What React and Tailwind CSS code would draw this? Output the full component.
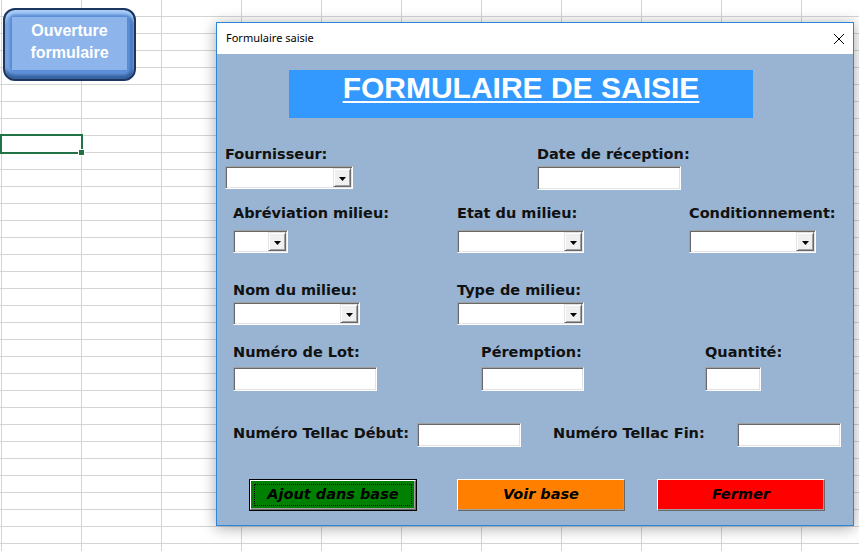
import { useState } from 'react'

// Contrôles façon UserForm VBA
const SUNKEN =
  'border border-t-[#a0a0a0] border-l-[#a0a0a0] border-r-white border-b-white shadow-[inset_1px_1px_0_#696969,inset_-1px_-1px_0_#e3e3e3] bg-white shrink-0'

function Label({ children, className = '' }) {
  return (
    <div className={`h-[18px] leading-[18px] text-[14.5px] font-bold text-[#111] whitespace-nowrap ${className}`}>
      {children}
    </div>
  )
}

function TextBox({ w, h = 24, className = '' }) {
  return <input className={`${SUNKEN} outline-none px-1 text-[13px] ${className}`} style={{ width: w, height: h }} />
}

function ComboBox({ w, className = '' }) {
  return (
    <div className={`${SUNKEN} flex justify-end p-px h-[23px] ${className}`} style={{ width: w }}>
      <div className="w-[18px] h-full bg-[#f0f0f0] border border-t-[#e3e3e3] border-l-[#e3e3e3] border-r-[#696969] border-b-[#696969] shadow-[inset_1px_1px_0_#fff,inset_-1px_-1px_0_#a0a0a0] flex items-center justify-center pt-[2px]">
        <svg width="7" height="4" viewBox="0 0 7 4">
          <path d="M0 0h7L3.5 4z" fill="#000" />
        </svg>
      </div>
    </div>
  )
}

function Bouton({ children, couleur, defaut, className = '' }) {
  return (
    <div className={`shrink-0 w-[168px] h-[32px] text-[14.5px] font-bold italic text-black ${defaut ? 'border border-black' : ''} ${className}`}>
      <div
        className={`w-full h-full border border-t-white border-l-white border-r-[#696969] border-b-[#696969] shadow-[inset_-1px_-1px_0_#a0a0a0] flex items-center justify-center ${couleur}`}
      >
        {defaut ? (
          <div className="w-[calc(100%-6px)] h-[calc(100%-6px)] border border-dotted border-black flex items-center justify-center">
            {children}
          </div>
        ) : (
          children
        )}
      </div>
    </div>
  )
}

export default function App() {
  const [ouvert, setOuvert] = useState(true)

  return (
    <div
      className="relative w-[859px] h-[551px] overflow-hidden bg-white bg-[linear-gradient(to_right,#d4d4d4_1px,transparent_1px),linear-gradient(to_bottom,#d4d4d4_1px,transparent_1px)] bg-[size:80px_17px] bg-[position:1px_16px]"
      style={{ fontFamily: '"DejaVu Sans", Verdana, sans-serif' }}
    >
      {/* Cellule sélectionnée */}
      <div className="absolute left-0 top-[134px] w-[83px] h-[20px] border-2 border-[#217346]">
        <div className="absolute right-[-3px] bottom-[-3px] w-[5px] h-[5px] bg-[#217346] outline outline-1 outline-white" />
      </div>

      {/* Bouton forme Excel */}
      <button
        onClick={() => setOuvert(true)}
        className="absolute left-[3px] top-[8px] w-[133px] h-[73px] rounded-[12px] border-2 border-[#1c3660] bg-[#6193da] pt-[7px] px-[7px] pb-[9px] shadow-[inset_0_4px_3px_#a9cdf6,inset_0_-4px_3px_#35629f,inset_4px_0_3px_#7ea9e6,inset_-4px_0_3px_#4876bd]"
      >
        <div
          className="w-full h-full bg-[#8db5ec] shadow-[0_0_2px_#4d7fc6] flex flex-col items-center justify-center pb-[4px] text-white font-bold text-[16px] leading-[22px]"
          style={{ fontFamily: '"Liberation Sans", Arial, sans-serif' }}
        >
          <span>Ouverture</span>
          <span>formulaire</span>
        </div>
      </button>

      {ouvert && (
        <div className="absolute left-[216px] top-[22px] w-[638px] h-[504px] border border-[#2b86d9] bg-[#98b4d2] shadow-[0_2px_14px_rgba(0,0,0,0.35)] flex flex-col">
          {/* Barre de titre */}
          <div className="h-[31px] bg-white flex items-center justify-between pl-[9px] pr-[9px]">
            <span className="text-[11px] text-black" style={{ fontFamily: '"Noto Sans", "Open Sans", sans-serif' }}>
              Formulaire saisie
            </span>
            <button onClick={() => setOuvert(false)} className="w-[10px] h-[10px] flex">
              <svg width="10" height="10" viewBox="0 0 10 10">
                <path d="M0 0L10 10M10 0L0 10" stroke="#000" strokeWidth="1" />
              </svg>
            </button>
          </div>

          {/* Corps */}
          <div className="flex-1 flex flex-col">
            <div
              className="ml-[72px] mt-[16px] w-[464px] h-[48px] bg-[#3399ff] text-center pt-px leading-[34px] text-[30px] font-bold text-white underline decoration-2 underline-offset-[3px]"
              style={{ fontFamily: '"Liberation Sans", Arial, sans-serif' }}
            >
              FORMULAIRE DE SAISIE
            </div>

            {/* Ligne 1 */}
            <div className="flex mt-[27px] ml-[8px]">
              <div className="w-[312px] shrink-0">
                <Label>Fournisseur:</Label>
                <ComboBox w={128} className="mt-[3px]" />
              </div>
              <div>
                <Label>Date de réception:</Label>
                <TextBox w={144} className="mt-[3px]" />
              </div>
            </div>

            {/* Ligne 2 */}
            <div className="flex mt-[14px] ml-[16px]">
              <div className="w-[224px] shrink-0">
                <Label>Abréviation milieu:</Label>
                <ComboBox w={55} className="mt-[8px]" />
              </div>
              <div className="w-[232px] shrink-0">
                <Label>Etat du milieu:</Label>
                <ComboBox w={127} className="mt-[8px]" />
              </div>
              <div>
                <Label>Conditionnement:</Label>
                <ComboBox w={127} className="mt-[8px]" />
              </div>
            </div>

            {/* Ligne 3 */}
            <div className="flex mt-[28px] ml-[16px]">
              <div className="w-[224px] shrink-0">
                <Label>Nom du milieu:</Label>
                <ComboBox w={127} className="mt-[3px]" />
              </div>
              <div>
                <Label>Type de milieu:</Label>
                <ComboBox w={127} className="mt-[3px]" />
              </div>
            </div>

            {/* Ligne 4 */}
            <div className="flex mt-[18px] ml-[16px]">
              <div className="w-[248px] shrink-0">
                <Label>Numéro de Lot:</Label>
                <TextBox w={144} className="mt-[6px]" />
              </div>
              <div className="w-[224px] shrink-0">
                <Label>Péremption:</Label>
                <TextBox w={103} className="mt-[6px]" />
              </div>
              <div>
                <Label>Quantité:</Label>
                <TextBox w={56} className="mt-[6px]" />
              </div>
            </div>

            {/* Ligne 5 */}
            <div className="flex items-start mt-[32px] ml-[16px]">
              <div className="w-[184px] shrink-0">
                <Label className="mt-[1px]">Numéro Tellac Début:</Label>
              </div>
              <TextBox w={104} />
              <div className="w-[184px] shrink-0 ml-[32px]">
                <Label className="mt-[1px]">Numéro Tellac Fin:</Label>
              </div>
              <TextBox w={104} />
            </div>

            {/* Boutons */}
            <div className="flex mt-[32px] ml-[32px]">
              <Bouton couleur="bg-[#008000]" defaut>Ajout dans base</Bouton>
              <Bouton couleur="bg-[#ff8000]" className="ml-[40px]">Voir base</Bouton>
              <Bouton couleur="bg-[#ff0000]" className="ml-[32px]">Fermer</Bouton>
            </div>
          </div>
        </div>
      )}
    </div>
  )
}
